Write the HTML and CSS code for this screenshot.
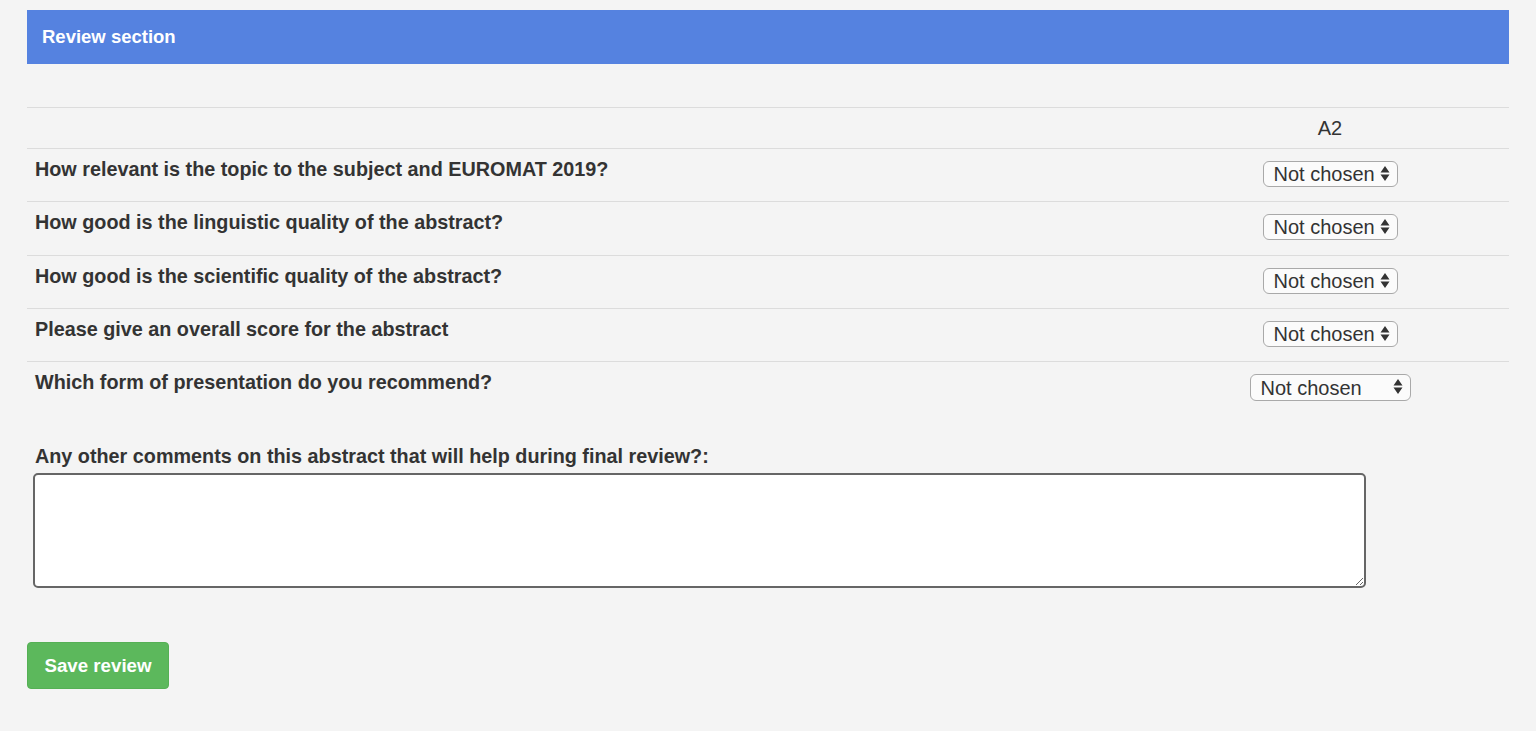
FILE: index.html
```html
<!DOCTYPE html>
<html>
<head>
<meta charset="utf-8">
<link rel="stylesheet" href="styles.css">
</head>
<body>
<div class="panel-heading">Review section</div>
<table class="review-table">
  <thead>
    <tr><th class="q"></th><th class="col">A2</th></tr>
  </thead>
  <tbody>
    <tr>
      <td class="q">How relevant is the topic to the subject and EUROMAT 2019?</td>
      <td class="col"><span class="sel"><select><option>Not chosen</option></select><svg class="arrows" width="10" height="17" viewBox="0 0 10 17"><path d="M5 1 L9.5 7.5 L0.5 7.5 Z M5 16 L9.5 9.5 L0.5 9.5 Z" fill="#333"/></svg></span></td>
    </tr>
    <tr>
      <td class="q">How good is the linguistic quality of the abstract?</td>
      <td class="col"><span class="sel"><select><option>Not chosen</option></select><svg class="arrows" width="10" height="17" viewBox="0 0 10 17"><path d="M5 1 L9.5 7.5 L0.5 7.5 Z M5 16 L9.5 9.5 L0.5 9.5 Z" fill="#333"/></svg></span></td>
    </tr>
    <tr>
      <td class="q">How good is the scientific quality of the abstract?</td>
      <td class="col"><span class="sel"><select><option>Not chosen</option></select><svg class="arrows" width="10" height="17" viewBox="0 0 10 17"><path d="M5 1 L9.5 7.5 L0.5 7.5 Z M5 16 L9.5 9.5 L0.5 9.5 Z" fill="#333"/></svg></span></td>
    </tr>
    <tr>
      <td class="q">Please give an overall score for the abstract</td>
      <td class="col"><span class="sel"><select><option>Not chosen</option></select><svg class="arrows" width="10" height="17" viewBox="0 0 10 17"><path d="M5 1 L9.5 7.5 L0.5 7.5 Z M5 16 L9.5 9.5 L0.5 9.5 Z" fill="#333"/></svg></span></td>
    </tr>
    <tr>
      <td class="q">Which form of presentation do you recommend?</td>
      <td class="col"><span class="sel wide"><select><option>Not chosen</option></select><svg class="arrows" width="10" height="17" viewBox="0 0 10 17"><path d="M5 1 L9.5 7.5 L0.5 7.5 Z M5 16 L9.5 9.5 L0.5 9.5 Z" fill="#333"/></svg></span></td>
    </tr>
  </tbody>
</table>
<div class="comments">
  <label class="comments-label">Any other comments on this abstract that will help during final review?:</label>
  <textarea class="comments-box"></textarea>
</div>
<button class="btn-save">Save review</button>
</body>
</html>
```
FILE: styles.css
```css
html, body {
  background: #f4f4f4;
}
body {
  margin: 0;
  padding: 10px 27px 40px 27px;
  font-family: "Liberation Sans", Arial, Helvetica, sans-serif;
  font-size: 20px;
  color: #333;
}
.panel-heading {
  background: #5582e0;
  color: #fff;
  font-weight: bold;
  font-size: 18.5px;
  height: 54px;
  line-height: 54px;
  padding: 0 15px;
  box-sizing: border-box;
}
.review-table {
  width: 100%;
  border-collapse: collapse;
  margin-top: 43px;
}
.review-table th,
.review-table td {
  border-top: 1px solid #dcdcdc;
  padding: 0 8px;
  vertical-align: top;
  text-align: left;
}
.review-table th {
  font-weight: normal;
  font-size: 20px;
  height: 40px;
  line-height: 20px;
  padding-top: 10px;
  padding-bottom: 10px;
  box-sizing: border-box;
}
.review-table td {
  padding-top: 10px;
  padding-bottom: 14.3px;
}
.review-table .col {
  width: 342px;
  text-align: center;
}
.review-table td.q {
  font-weight: bold;
  font-size: 19.8px;
  line-height: 20px;
}
.sel {
  position: relative;
  display: inline-block;
  margin-top: 2px;
  vertical-align: top;
}
.sel select {
  appearance: none;
  -webkit-appearance: none;
  width: 135px;
  height: 26px;
  border: 1px solid #a9a9a9;
  border-radius: 6px;
  background: #fbfbfb;
  font-family: "Liberation Sans", Arial, Helvetica, sans-serif;
  font-size: 20px;
  color: #333;
  padding: 0 0 0 10px;
  margin: 0;
  display: block;
  text-align: left;
}
.sel.wide select {
  width: 161px;
  height: 27px;
}
.sel .arrows {
  position: absolute;
  right: 8px;
  top: 4px;
  pointer-events: none;
}
.comments {
  margin-top: 31px;
  padding: 0 6px;
}
.comments-label {
  display: block;
  font-weight: bold;
  font-size: 19.8px;
  line-height: 20px;
  padding-left: 2px;
  margin-bottom: 7px;
}
.comments-box {
  display: block;
  width: 1333px;
  height: 115px;
  box-sizing: border-box;
  border: 2px solid #666;
  border-radius: 5px;
  background: #fff;
  margin: 0;
}
.btn-save {
  display: block;
  margin-top: 54px;
  width: 142px;
  height: 47px;
  background: #5cb85c;
  border: 1px solid #55b055;
  border-radius: 4px;
  color: #fff;
  font-family: "Liberation Sans", Arial, Helvetica, sans-serif;
  font-weight: bold;
  font-size: 18.7px;
  padding: 0;
}
```
